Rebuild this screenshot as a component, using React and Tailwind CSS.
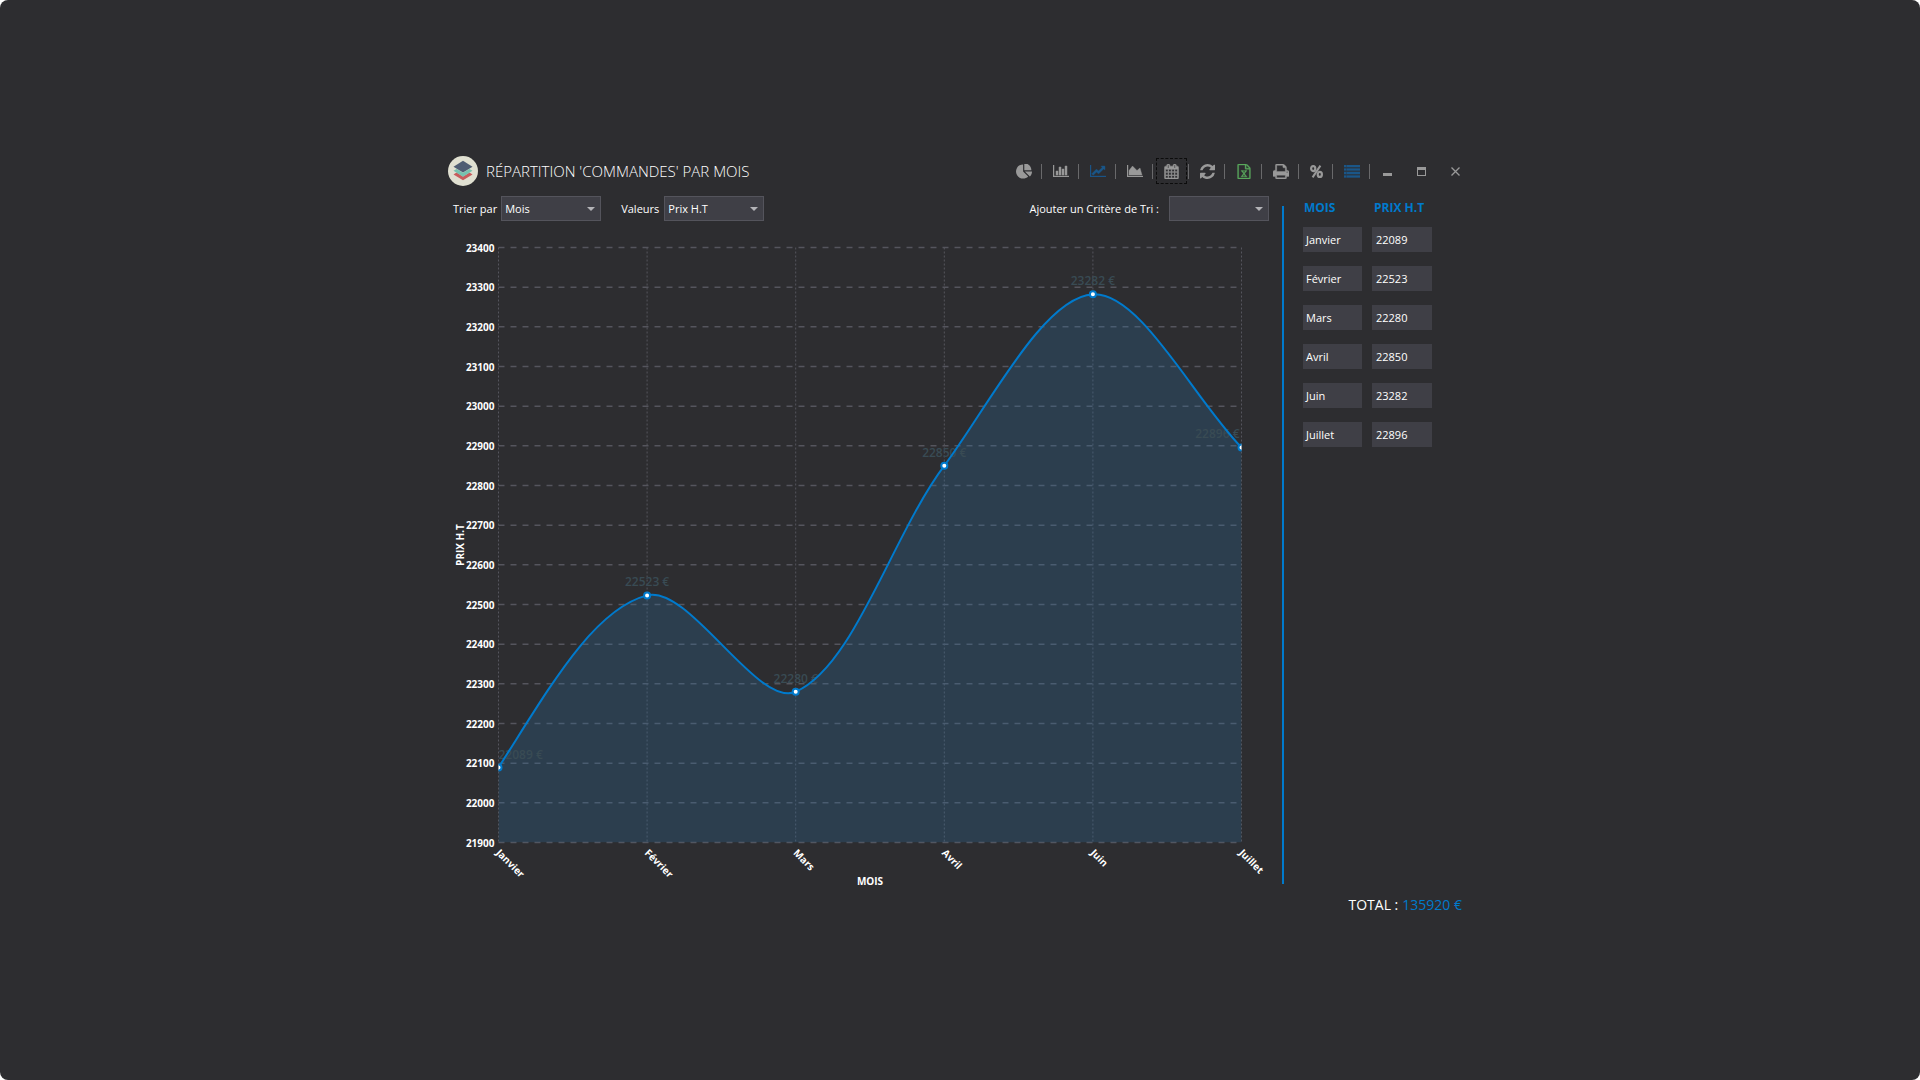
import React from "react";

const DATA = [
  { month: "Janvier", value: 22089 },
  { month: "Février", value: 22523 },
  { month: "Mars", value: 22280 },
  { month: "Avril", value: 22850 },
  { month: "Juin", value: 23282 },
  { month: "Juillet", value: 22896 },
];

const TOTAL = DATA.reduce((sum, d) => sum + d.value, 0);

/* ---------- icons ---------- */

function Glyph({ box, className, d, weight = 0 }) {
  return (
    <svg
      viewBox={box}
      className={className}
      fill="currentColor"
      stroke={weight ? "currentColor" : "none"}
      strokeWidth={weight}
      aria-hidden="true"
    >
      <path d={d} />
    </svg>
  );
}

const PieIcon = () => (
  <Glyph
    box="0 128 1728 1536"
    className="h-[15px] w-4"
    d="M768 890l546 546q-106 108-247.500 168t-298.500 60q-209 0-385.500-103t-279.500-279.500-103-385.500 103-385.500 279.500-279.500 385.500-103v762zm187 6h773q0 157-60 298.500t-168 247.500zm709-128h-768v-768q209 0 385.500 103t279.500 279.500 103 385.500z"
  />
);

const BarIcon = () => (
  <Glyph
    box="0 128 2048 1536"
    className="h-3 w-4"
    weight={60}
    d="M640 896v512h-256v-512h256zm384-512v1024h-256v-1024h256zm1024 1152v128h-2048v-1536h128v1408h1920zm-640-896v768h-256v-768h256zm384-384v1152h-256v-1152h256z"
  />
);

const LineIcon = () => (
  <Glyph
    box="0 128 2048 1536"
    className="h-3 w-4"
    weight={50}
    d="M2048 1536v128h-2048v-1536h128v1408h1920zm-128-1248v435q0 21-19.500 29.500t-35.500-7.500l-121-121-633 633q-10 10-23 10t-23-10l-233-233-416 416-192-192 585-585q10-10 23-10t23 10l233 233 464-464-121-121q-16-16-7.500-35.500t29.500-19.500h435q14 0 23 9t9 23z"
  />
);

const AreaIcon = () => (
  <Glyph
    box="0 128 2048 1536"
    className="h-3 w-4"
    weight={50}
    d="M2048 1536v128h-2048v-1536h128v1408h1920zm-384-1024l256 896h-1664v-576l448-576 576 576z"
  />
);

const CalendarIcon = () => (
  <Glyph
    box="64 0 1664 1792"
    className="h-[15px] w-[15px]"
    weight={60}
    d="M192 1664h288v-288h-288v288zm352 0h320v-288h-320v288zm-352-352h288v-320h-288v320zm352 0h320v-320h-320v320zm-352-384h288v-288h-288v288zm736 736h320v-288h-320v288zm-384-736h320v-288h-320v288zm768 736h288v-288h-288v288zm-384-352h320v-320h-320v320zm-352-864v-288q0-13-9.500-22.500t-22.500-9.500h-64q-13 0-22.500 9.500t-9.500 22.500v288q0 13 9.500 22.500t22.500 9.500h64q13 0 22.500-9.500t9.500-22.500zm736 864h288v-320h-288v320zm-384-384h320v-288h-320v288zm384 0h288v-288h-288v288zm32-480v-288q0-13-9.500-22.500t-22.500-9.500h-64q-13 0-22.500 9.500t-9.500 22.500v288q0 13 9.500 22.500t22.500 9.500h64q13 0 22.500-9.500t9.500-22.500zm384-64v1280q0 52-38 90t-90 38h-1408q-52 0-90-38t-38-90v-1280q0-52 38-90t90-38h128v-96q0-66 47-113t113-47h64q66 0 113 47t47 113v96h384v-96q0-66 47-113t113-47h64q66 0 113 47t47 113v96h128q52 0 90 38t38 90z"
  />
);

const RefreshIcon = () => (
  <Glyph
    box="128 128 1536 1536"
    className="h-[15px] w-[15px]"
    d="M1639 1056q0 5-1 7-64 268-268 434.500t-478 166.500q-146 0-282.500-55t-243.500-157l-129 129q-19 19-45 19t-45-19-19-45v-448q0-26 19-45t45-19h448q26 0 45 19t19 45-19 45l-137 137q71 66 161 102t187 36q134 0 250-65t186-179q11-17 53-117 8-23 30-23h192q13 0 22.500 9.500t9.500 22.500zm25-800v448q0 26-19 45t-45 19h-448q-26 0-45-19t-19-45 19-45l138-138q-148-137-349-137-134 0-250 65t-186 179q-11 17-53 117-8 23-30 23h-199q-13 0-22.500-9.500t-9.500-22.500v-7q65-268 270-434.500t480-166.500q146 0 284 55.500t245 156.500l130-129q19-19 45-19t45 19 19 45z"
  />
);

const ExcelIcon = () => (
  <Glyph
    box="64 0 1664 1792"
    className="h-[15px] w-4"
    weight={40}
    d="M1596 380q28 28 48 76t20 88v1152q0 40-28 68t-68 28h-1344q-40 0-68-28t-28-68v-1600q0-40 28-68t68-28h896q40 0 88 20t76 48zm-444-244v376h376q-10-29-22-41l-313-313q-12-12-41-22zm384 1528v-1024h-416q-40 0-68-28t-28-68v-416h-768v1536h1280zm-979-234v106h281v-106h-75l103-161q5-7 10-16.500t7.500-13.500 3.500-4h2q1 4 5 10 2 4 4.500 7.500t6 8 6.500 8.500l107 161h-76v106h291v-106h-68l-192-273 195-282h67v-107h-279v107h74l-103 159q-4 7-10 16.500t-9 13.500l-2 3h-2q-1-4-5-10-6-11-17-23l-106-159h76v-107h-290v107h68l189 272-194 283h-68z"
  />
);

const PrintIcon = () => (
  <Glyph
    box="64 128 1664 1536"
    className="h-[15px] w-4"
    weight={40}
    d="M448 1536h896v-256h-896v256zm0-640h896v-384h-160q-40 0-68-28t-28-68v-160h-640v640zm1152 64q0-26-19-45t-45-19-45 19-19 45 19 45 45 19 45-19 19-45zm128 0v416q0 13-9.500 22.500t-22.500 9.500h-224v160q0 40-28 68t-68 28h-960q-40 0-68-28t-28-68v-160h-224q-13 0-22.500-9.500t-9.500-22.500v-416q0-79 56.500-135.500t135.500-56.500h64v-544q0-40 28-68t68-28h672q40 0 88 20t76 48l152 152q28 28 48 76t20 88v256h64q79 0 135.500 56.500t56.500 135.500z"
  />
);

const PercentIcon = () => (
  <svg viewBox="0 0 13 13" className="h-[13px] w-[13px]" fill="none" stroke="currentColor" aria-hidden="true">
    <ellipse cx="3.2" cy="3.6" rx="2.1" ry="2.5" strokeWidth="2.2" />
    <ellipse cx="9.8" cy="9.4" rx="2.1" ry="2.5" strokeWidth="2.2" />
    <path d="M10.4 .6L2.6 12.4" strokeWidth="2" />
  </svg>
);

const ListIcon = () => (
  <svg viewBox="0 0 16 13" className="h-[13px] w-4" fill="currentColor" aria-hidden="true">
    {[0, 3.5, 7, 10.5].map((y) => (
      <g key={y}>
        <rect x="0" y={y} width="2" height="2" />
        <rect x="2.5" y={y} width="13.5" height="2" />
      </g>
    ))}
    <rect width="16" height="13" opacity=".3" />
  </svg>
);

const Logo = () => (
  <svg viewBox="0 0 30 30" className="h-[30px] w-[30px] shrink-0" aria-hidden="true">
    <circle cx="15" cy="15" r="15" fill="#e0e0d1" />
    <path d="M5.500 18.400l3-1.800 6.500 4 6.500-4 3 1.800-9.500 5.800z" fill="#c75c5c" />
    <path d="M5.500 14.800l3-1.800 6.500 3.700 6.500-3.700 3 1.800-9.500 6z" fill="#76c2af" />
    <path d="M15 4.800l9.500 5.900-9.500 5.900-9.500-5.900z" fill="#4f5d73" />
  </svg>
);

/* ---------- header ---------- */

const TOOLS = [
  { label: "Secteurs", Icon: PieIcon },
  { label: "Barres", Icon: BarIcon },
  { label: "Courbe", Icon: LineIcon, tone: "text-[#1a5688]" },
  { label: "Aires", Icon: AreaIcon },
  { label: "Calendrier", Icon: CalendarIcon, focused: true },
  { label: "Actualiser", Icon: RefreshIcon },
  { label: "Exporter vers Excel", Icon: ExcelIcon, tone: "text-[#5aa95e]" },
  { label: "Imprimer", Icon: PrintIcon },
  { label: "Pourcentage", Icon: PercentIcon },
  { label: "Liste", Icon: ListIcon, tone: "text-[#1a5688]" },
];

function Toolbar() {
  return (
    <div className="-mr-[3px] flex items-center" role="toolbar" aria-label="Outils du graphique">
      {TOOLS.map(({ label, Icon, tone, focused }) => (
        <React.Fragment key={label}>
          <button
            type="button"
            aria-label={label}
            className={`flex h-[26px] items-center border border-dashed px-[7px] ${
              focused ? "border-[#0c0c0c]" : "border-transparent"
            } ${tone || "text-[#999999]"}`}
          >
            <Icon />
          </button>
          <span className="mr-[3px] ml-px h-[15px] w-px bg-[#69696b]" />
        </React.Fragment>
      ))}
    </div>
  );
}

function WindowButton({ label, children }) {
  return (
    <button type="button" aria-label={label} className="flex h-[26px] w-[34px] items-center justify-center text-[#999999]">
      {children}
    </button>
  );
}

function WindowButtons() {
  return (
    <div className="flex">
      <WindowButton label="Réduire">
        <svg viewBox="0 0 9 9" className="h-[9px] w-[9px]" aria-hidden="true">
          <rect y="6" width="9" height="3" fill="currentColor" />
        </svg>
      </WindowButton>
      <WindowButton label="Agrandir">
        <svg viewBox="0 0 9 9" className="h-[9px] w-[9px]" aria-hidden="true">
          <path d="M0 0h9v9H0zM1 3v5h7V3z" fill="currentColor" fillRule="evenodd" />
        </svg>
      </WindowButton>
      <WindowButton label="Fermer">
        <svg viewBox="0 0 9 9" className="h-[9px] w-[9px]" aria-hidden="true">
          <path d="M.5 .5l8 8M8.500 .5l-8 8" stroke="currentColor" strokeWidth="1.300" />
        </svg>
      </WindowButton>
    </div>
  );
}

/* ---------- filters ---------- */

function Field({ id, label, options, gap }) {
  return (
    <div className={`flex items-center ${gap}`}>
      <label htmlFor={id}>{label}</label>
      <div className="relative">
        <select
          id={id}
          className="block h-[25px] w-[100px] appearance-none border border-[#54545c] bg-[#3f3f46] pr-5 pl-[3px] text-[11px] leading-none font-medium text-white"
        >
          {options.map((o) => (
            <option key={o}>{o}</option>
          ))}
        </select>
        <svg
          viewBox="0 0 8 4"
          className="pointer-events-none absolute top-[11px] right-[6px] h-1 w-2 text-[#b4b4b8]"
          aria-hidden="true"
        >
          <path d="M0 0h8L4 4z" fill="currentColor" />
        </svg>
      </div>
    </div>
  );
}

/* ---------- chart ---------- */

const LEFT = 54.5;
const TOP = 17.5;
const PLOT_W = 743;
const PLOT_H = 595;
const MIN = 21900;
const MAX = 23400;
const BOTTOM = TOP + PLOT_H;
const RIGHT = LEFT + PLOT_W;

// Direction and strength with which the curve leaves its first point.
const START_TANGENT = { x: 50, y: -78 };

const xAt = (i) => LEFT + (i * PLOT_W) / (DATA.length - 1);
const yAt = (v) => BOTTOM - ((v - MIN) / (MAX - MIN)) * PLOT_H;

const POINTS = DATA.map((d, i) => ({ x: xAt(i), y: yAt(d.value) }));
const TICKS = Array.from({ length: 16 }, (_, i) => MAX - i * 100);

function smoothPath(points, smoothness = 0.65) {
  const mid = (a, b) => ({ x: (a.x + b.x) / 2, y: (a.y + b.y) / 2 });
  const dist = (a, b) => Math.hypot(b.x - a.x, b.y - a.y);
  let d = `M${points[0].x} ${points[0].y}`;
  for (let i = 0; i < points.length - 1; i++) {
    const p0 = points[Math.max(i - 1, 0)];
    const p1 = points[i];
    const p2 = points[i + 1];
    const p3 = points[Math.min(i + 2, points.length - 1)];
    const a = mid(p0, p1);
    const b = mid(p1, p2);
    const c = mid(p2, p3);
    const l1 = dist(p0, p1);
    const l2 = dist(p1, p2);
    const l3 = dist(p2, p3);
    const k1 = l1 / (l1 + l2);
    const k2 = l2 / (l2 + l3);
    const m1 = { x: a.x + (b.x - a.x) * k1, y: a.y + (b.y - a.y) * k1 };
    const m2 = { x: b.x + (c.x - b.x) * k2, y: b.y + (c.y - b.y) * k2 };
    const c1 =
      i === 0
        ? { x: p1.x + START_TANGENT.x, y: p1.y + START_TANGENT.y }
        : { x: (b.x - m1.x) * smoothness + p1.x, y: (b.y - m1.y) * smoothness + p1.y };
    const c2 = { x: (b.x - m2.x) * smoothness + p2.x, y: (b.y - m2.y) * smoothness + p2.y };
    d += ` C${c1.x} ${c1.y} ${c2.x} ${c2.y} ${p2.x} ${p2.y}`;
  }
  return d;
}

const CURVE = smoothPath(POINTS);

function labelAnchor(i) {
  if (i === 0) return "start";
  if (i === DATA.length - 1) return "end";
  return "middle";
}

function Chart() {
  return (
    <svg viewBox="0 0 832 664" className="block h-auto w-full" role="img" aria-label="Prix H.T par mois">
      <defs>
        <clipPath id="plot">
          <rect x={LEFT} y={TOP} width={PLOT_W} height={PLOT_H} />
        </clipPath>
      </defs>

      <g stroke="#55555d">
        {TICKS.map((t) => (
          <line key={t} x1={LEFT} x2={RIGHT} y1={yAt(t)} y2={yAt(t)} strokeWidth="1.500" strokeDasharray="6 6" />
        ))}
        {POINTS.map((p) => (
          <line key={p.x} x1={p.x} x2={p.x} y1={TOP} y2={BOTTOM} strokeDasharray="2 2" />
        ))}
      </g>

      <g clipPath="url(#plot)">
        <path d={`${CURVE} L${RIGHT} ${BOTTOM} L${LEFT} ${BOTTOM} Z`} fill="#2a6fa8" fillOpacity=".26" />
      </g>

      <g fill="#394b54" className="text-[12px] font-semibold">
        {DATA.map((d, i) => (
          <text
            key={d.month}
            x={POINTS[i].x + (i === DATA.length - 1 ? -2 : 0)}
            y={POINTS[i].y - 9}
            textAnchor={labelAnchor(i)}
          >
            {d.value} €
          </text>
        ))}
      </g>

      <g clipPath="url(#plot)">
        <path d={CURVE} fill="none" stroke="#007acc" strokeWidth="2" />
        {POINTS.map((p) => (
          <circle key={p.x} cx={p.x} cy={p.y} r="3" fill="#ffffff" stroke="#007acc" strokeWidth="2" />
        ))}
      </g>

      <g fill="#ffffff" className="text-[10px] font-bold">
        {TICKS.map((t) => (
          <text key={t} x={LEFT - 4} y={yAt(t) + 4} textAnchor="end">
            {t}
          </text>
        ))}
        {DATA.map((d, i) => (
          <text key={d.month} transform={`translate(${xAt(i) - 3} ${BOTTOM + 11}) rotate(45)`}>
            {d.month}
          </text>
        ))}
        <text transform={`translate(20 ${TOP + PLOT_H / 2}) rotate(-90)`} textAnchor="middle">
          PRIX H.T
        </text>
        <text x={LEFT + PLOT_W / 2} y={BOTTOM + 42} textAnchor="middle">
          MOIS
        </text>
      </g>
    </svg>
  );
}

/* ---------- data table ---------- */

function DataTable() {
  return (
    <table className="border-separate border-spacing-x-[10px] border-spacing-y-[14px] text-left">
      <thead>
        <tr className="h-2.5 text-[12px] leading-[10px] text-[#007acc]">
          <th scope="col" className="w-[59px] p-0 pl-px font-bold">MOIS</th>
          <th scope="col" className="w-[60px] p-0 pl-0.5 font-bold whitespace-nowrap">PRIX H.T</th>
        </tr>
      </thead>
      <tbody>
        {DATA.map((d) => (
          <tr key={d.month} className="h-[25px]">
            <td className="bg-[#3f3f46] p-0 pl-[3px]">{d.month}</td>
            <td className="bg-[#3f3f46] p-0 pl-1">{d.value}</td>
          </tr>
        ))}
      </tbody>
    </table>
  );
}

export default function App() {
  return (
    <div className="min-h-screen bg-white">
      <div className="flex min-h-screen items-center justify-center rounded-lg bg-[#2d2d30] font-['Open_Sans','Noto_Sans',sans-serif] text-[11px] leading-4 font-medium text-white">
        <main className="w-full max-w-[1032px] pb-2">
          <header className="flex items-center gap-2 pr-1 pl-1">
            <Logo />
            <h1 className="text-[15px] leading-6 font-light whitespace-nowrap">RÉPARTITION 'COMMANDES' PAR MOIS</h1>
            <div className="ml-auto flex items-center">
              <Toolbar />
              <WindowButtons />
            </div>
          </header>

          <div className="flex">
            <section className="min-w-0 flex-1">
              <div className="flex items-center pt-2.5 pr-[7px] pb-[9px] pl-[9px]">
                <Field id="sort" label="Trier par" options={["Mois"]} gap="gap-1" />
                <div className="ml-5">
                  <Field id="values" label="Valeurs" options={["Prix H.T"]} gap="gap-[5px]" />
                </div>
                <div className="ml-auto">
                  <Field id="criteria" label="Ajouter un Critère de Tri :" options={[""]} gap="gap-2.5" />
                </div>
              </div>
              <Chart />
            </section>

            <div className="mt-5 mb-2.5 ml-1.5 w-0.5 bg-[#007acc]" />

            <aside className="w-[192px] pt-[3px] pl-[9px]">
              <DataTable />
            </aside>
          </div>

          <footer className="flex justify-end gap-1 pr-3.5 text-[14px] leading-[22px] font-normal">
            <span>TOTAL :</span>
            <output className="text-[#007acc]">{TOTAL} €</output>
          </footer>
        </main>
      </div>
    </div>
  );
}
